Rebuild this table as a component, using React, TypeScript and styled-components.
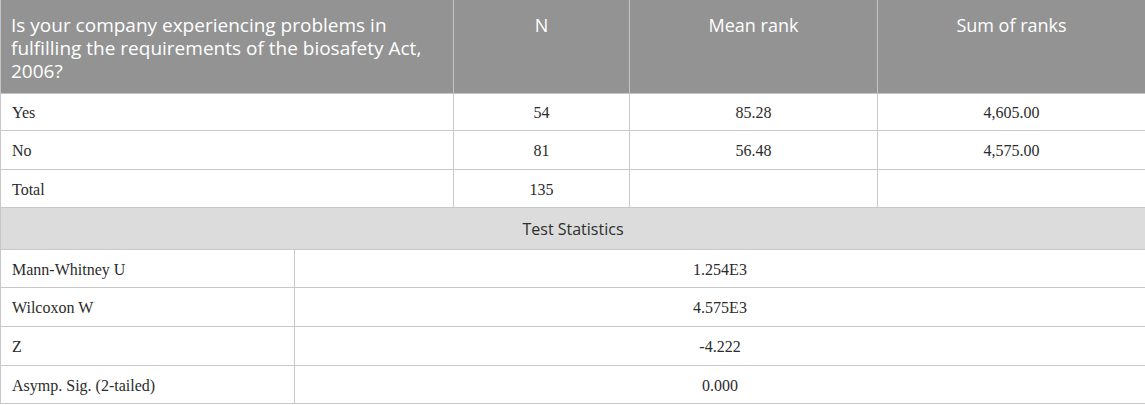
import React from "react";
import styled, { createGlobalStyle } from "styled-components";

const Global = createGlobalStyle`
  html, body { margin: 0; padding: 0; background: #ffffff; }
`;

const Table = styled.table`
  width: 1145px;
  border-collapse: collapse;
  table-layout: fixed;
  font-family: "Liberation Serif", "Times New Roman", serif;
  color: #2b2b2b;
`;

const HeadCell = styled.th<{ $align?: string; $size?: number }>`
  background: #939393;
  color: #ffffff;
  font-family: "Open Sans", "Noto Sans", sans-serif;
  font-weight: 400;
  font-size: ${(p) => p.$size || 18}px;
  line-height: 23px;
  text-align: ${(p) => p.$align || "center"};
  vertical-align: top;
  padding: 14px 10px 0 10px;
  height: 79px;
  border: 1px solid #c4c4c4;
  border-top: none;
`;

const Row = styled.tr<{ $h: number }>`
  height: ${(p) => p.$h}px;
`;

const Cell = styled.td<{ $align?: string }>`
  font-size: 16px;
  line-height: 20px;
  text-align: ${(p) => p.$align || "center"};
  vertical-align: middle;
  padding: 2px 11px 0 11px;
  border: 1px solid #c8c8c8;
`;

const BandCell = styled.td`
  background: #dcdcdc;
  color: #2e2e2e;
  font-family: "Open Sans", "Noto Sans", sans-serif;
  font-size: 16px;
  text-align: center;
  vertical-align: top;
  padding: 10px 10px 0 10px;
  border: 1px solid #c8c8c8;
`;

const groups = [
  { label: "Yes", n: "54", mean: "85.28", sum: "4,605.00", h: 37 },
  { label: "No", n: "81", mean: "56.48", sum: "4,575.00", h: 39 },
  { label: "Total", n: "135", mean: "", sum: "", h: 38 },
];

const stats = [
  { label: "Mann-Whitney U", value: "1.254E3", h: 38 },
  { label: "Wilcoxon W", value: "4.575E3", h: 39 },
  { label: "Z", value: "-4.222", h: 39 },
  { label: "Asymp. Sig. (2-tailed)", value: "0.000", h: 38 },
];

export default function App() {
  return (
    <>
      <Global />
      <Table>
        <colgroup>
          <col style={{ width: 294 }} />
          <col style={{ width: 159 }} />
          <col style={{ width: 176 }} />
          <col style={{ width: 248 }} />
          <col style={{ width: 268 }} />
        </colgroup>
        <thead>
          <tr>
            <HeadCell colSpan={2} $align="left" $size={19}>
              Is your company experiencing problems in fulfilling the requirements of the biosafety Act, 2006?
            </HeadCell>
            <HeadCell>N</HeadCell>
            <HeadCell>Mean rank</HeadCell>
            <HeadCell>Sum of ranks</HeadCell>
          </tr>
        </thead>
        <tbody>
          {groups.map((g) => (
            <Row key={g.label} $h={g.h}>
              <Cell colSpan={2} $align="left">{g.label}</Cell>
              <Cell>{g.n}</Cell>
              <Cell>{g.mean}</Cell>
              <Cell>{g.sum}</Cell>
            </Row>
          ))}
          <Row $h={42}>
            <BandCell colSpan={5}>Test Statistics</BandCell>
          </Row>
          {stats.map((s) => (
            <Row key={s.label} $h={s.h}>
              <Cell $align="left">{s.label}</Cell>
              <Cell colSpan={4}>{s.value}</Cell>
            </Row>
          ))}
        </tbody>
      </Table>
    </>
  );
}
